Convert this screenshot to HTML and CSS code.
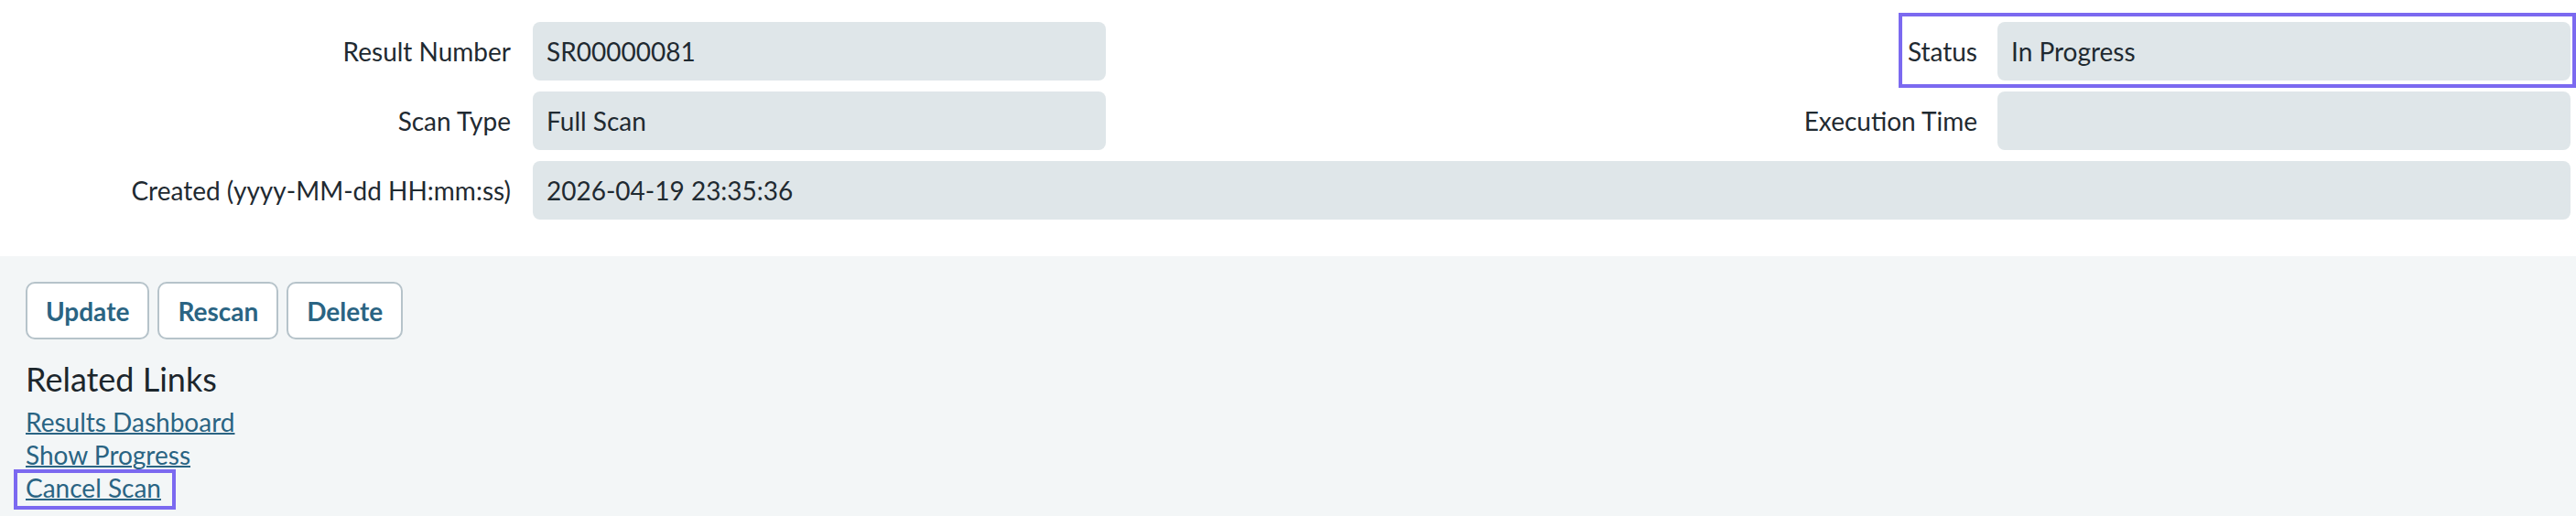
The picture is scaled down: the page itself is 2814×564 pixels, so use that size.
FILE: index.html
```html
<!DOCTYPE html>
<html lang="en">
<head>
    <meta charset="UTF-8">
    <meta name="viewport" content="width=device-width, initial-scale=1.0">
    <title>Scan Result</title>
    <link rel="stylesheet" href="styles.css">
</head>
<body>
    <div class="details">
        <div class="row">
            <label class="label label-left">Result Number</label>
            <div class="field">SR00000081</div>
            <div class="pair">
                <div class="pair-inner marked">
                    <label class="label">Status</label>
                    <div class="field">In Progress</div>
                </div>
            </div>
        </div>
        <div class="row">
            <label class="label label-left">Scan Type</label>
            <div class="field">Full Scan</div>
            <div class="pair">
                <div class="pair-inner">
                    <label class="label">Execution Time</label>
                    <div class="field"></div>
                </div>
            </div>
        </div>
        <div class="row">
            <label class="label label-left">Created (yyyy-MM-dd HH:mm:ss)</label>
            <div class="field field-wide">2026-04-19 23:35:36</div>
        </div>
    </div>

    <div class="actions">
        <div class="buttons">
            <button class="btn">Update</button>
            <button class="btn">Rescan</button>
            <button class="btn">Delete</button>
        </div>
        <h2 class="links-title">Related Links</h2>
        <ul class="links">
            <li><a href="#">Results Dashboard</a></li>
            <li><a href="#">Show Progress</a></li>
            <li><a href="#" class="marked-link">Cancel Scan</a></li>
        </ul>
    </div>
</body>
</html>
```

FILE: styles.css
```css
/* Scan result page */
body {
    font-family: Lato, "Open Sans", sans-serif;
    margin: 0;
    padding: 0;
    background-color: #ffffff;
    color: #1f2a31;
    height: 564px;
    overflow: hidden;
}

/* read-only detail fields */
.details {
    display: flex;
    flex-direction: column;
    gap: 12px;
    padding: 24px 6px 40px 0;
}

.row {
    display: flex;
    align-items: center;
    gap: 22px;
    height: 64px;
}

.label {
    font-size: 28px;
    color: #1f2a31;
    text-align: right;
    white-space: nowrap;
}

.label-left {
    width: 558px;
    flex-shrink: 0;
}

.row .label-left {
    margin-right: 2px;
}

.field {
    box-sizing: border-box;
    width: 626px;
    height: 64px;
    flex-shrink: 0;
    padding: 0 15px;
    display: flex;
    align-items: center;
    background-color: #dfe6e9;
    border-radius: 8px;
    font-size: 28px;
    color: #1f2a31;
}

.field-wide {
    flex: 1;
    width: auto;
}

.pair {
    flex: 1;
    display: flex;
    justify-content: flex-end;
}

.pair-inner {
    display: flex;
    align-items: center;
    gap: 22px;
}

/* purple highlight frames */
.marked {
    position: relative;
}

.marked::after {
    content: "";
    position: absolute;
    top: -10px;
    right: -6px;
    bottom: -8px;
    left: -10px;
    border: 4px solid #7b69f0;
    pointer-events: none;
}

/* lower action area */
.actions {
    background-color: #f3f6f7;
    padding: 28px 28px 0 28px;
    height: 284px;
    box-sizing: border-box;
}

.buttons {
    display: flex;
    gap: 9px;
}

.btn {
    box-sizing: border-box;
    height: 63px;
    padding: 0 20px;
    border: 2px solid #b6c3ca;
    border-radius: 10px;
    background-color: #ffffff;
    color: #2a6483;
    font-family: Lato, "Open Sans", sans-serif;
    font-size: 28px;
    font-weight: bold;
    cursor: pointer;
}

.links-title {
    margin: 22px 0 7px 0;
    font-size: 36px;
    font-weight: normal;
    line-height: 43px;
    color: #1c262c;
}

.links {
    list-style: none;
    margin: 0;
    padding: 0;
}

.links li {
    font-size: 28px;
    line-height: 36px;
}

.links a {
    color: #2a6483;
    text-decoration: underline;
    text-decoration-thickness: 2px;
}

.marked-link {
    position: relative;
    display: inline-block;
}

.marked-link::after {
    content: "";
    position: absolute;
    top: -2px;
    right: -16px;
    bottom: -6px;
    left: -13px;
    border: 4px solid #7b69f0;
    pointer-events: none;
}
```
